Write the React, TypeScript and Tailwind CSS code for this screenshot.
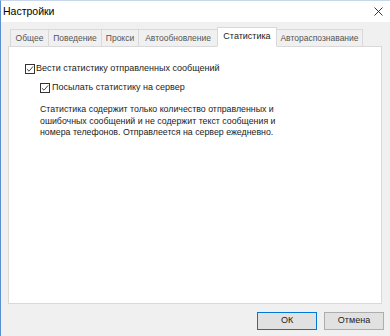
import React from "react";

const tabs = [
  { label: "Общее", w: "w-[39px]" },
  { label: "Поведение", w: "w-[54px]" },
  { label: "Прокси", w: "w-[38px]" },
  { label: "Автообновление", w: "w-[80px]" },
  { label: "Статистика", w: "w-[60px]" },
  { label: "Автораспознавание", w: "w-[87px]" },
];

function Check({ checked }: { checked: boolean }) {
  return (
    <span className="w-[10px] h-[10px] border border-[#333333] bg-white flex items-center justify-center shrink-0">
      {checked && (
        <svg width="8" height="8" viewBox="0 0 8 8">
          <path d="M0.9 4.1 L3 6.2 L7.1 1.4" fill="none" stroke="#333333" strokeWidth="0.9" />
        </svg>
      )}
    </span>
  );
}

export default function App() {
  return (
    <div
      className="w-[390px] h-[336px] bg-[#f0f0f0] border-l border-t border-l-[#5b8fd0] border-t-[#c9d7ea] flex flex-col text-[#1a1a1a]"
      style={{ fontFamily: '"Liberation Sans", Arial, sans-serif' }}
    >
      {/* Title bar */}
      <div className="h-[21px] bg-white flex items-center justify-between pl-[2px] pr-[7px] shrink-0">
        <span className="text-[10.5px] text-black">Настройки</span>
        <svg width="9" height="9" viewBox="0 0 9 9">
          <path d="M0.5 0.5 L8.5 8.5 M8.5 0.5 L0.5 8.5" stroke="#222" strokeWidth="0.9" />
        </svg>
      </div>

      {/* Tabs */}
      <div className="flex items-end pl-[9px] mt-[5px] h-[19px] shrink-0">
        {tabs.map((t) => {
          const active = t.label === "Статистика";
          return active ? (
            <div
              key={t.label}
              className={`${t.w} h-[20px] -mb-px -ml-px relative z-10 bg-white border border-[#d9d9d9] border-b-white flex items-center justify-center text-[9px] text-[#222]`}
            >
              {t.label}
            </div>
          ) : (
            <div
              key={t.label}
              className={`${t.w} h-[17px] bg-[#f0f0f0] border border-[#d9d9d9] border-b-0 -ml-px first:ml-0 flex items-center justify-center text-[8.5px] text-[#555]`}
            >
              {t.label}
            </div>
          );
        })}
      </div>

      {/* Panel */}
      <div className="ml-[7px] w-[374px] h-[258px] bg-white border border-[#d9d9d9] shrink-0 pt-[16px] pl-[16px]">
        <label className="flex items-center gap-[1px] h-[11px] text-[9px] text-[#222]">
          <Check checked />
          <span>Вести статистику отправленных сообщений</span>
        </label>
        <label className="flex items-center gap-[2px] h-[11px] text-[9px] text-[#222] ml-[15px] mt-[8px]">
          <Check checked />
          <span>Посылать статистику на сервер</span>
        </label>
        <p className="ml-[15px] mt-[11px] text-[8.8px] leading-[11.5px] text-[#222]">
          Статистика содержит только количество отправленных и
          <br />
          ошибочных сообщений и не содержит текст сообщения и
          <br />
          номера телефонов. Отправлеется на сервер ежедневно.
        </p>
      </div>

      {/* Footer */}
      <div className="flex justify-end gap-[7px] pr-[6px] mt-[8px]">
        <button className="w-[60px] h-[18px] bg-[#e1e1e1] border border-[#0078d7] text-[9px] text-[#222] flex items-center justify-center">
          ОК
        </button>
        <button className="w-[60px] h-[18px] bg-[#e1e1e1] border border-[#adadad] text-[9px] text-[#222] flex items-center justify-center">
          Отмена
        </button>
      </div>
    </div>
  );
}
